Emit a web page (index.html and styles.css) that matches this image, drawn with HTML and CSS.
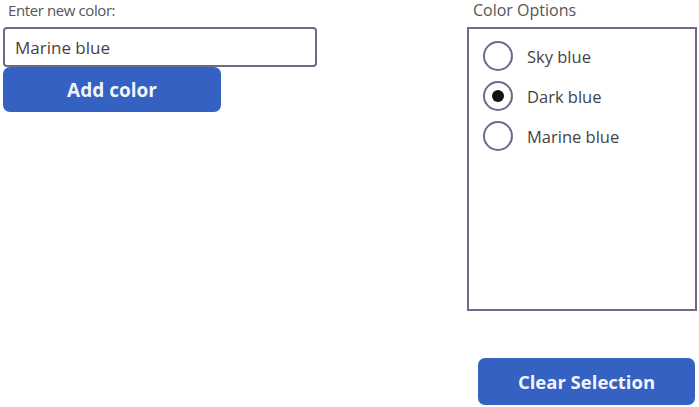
FILE: index.html
```html
<!DOCTYPE html>
<html lang="en">
<head>
  <meta charset="UTF-8">
  <meta name="viewport" content="width=device-width, initial-scale=1.0">
  <title>Color Options</title>
  <link rel="stylesheet" href="styles.css">
</head>
<body>
  <main class="screen">
    <section class="add-panel">
      <p class="label">Enter new color:</p>
      <input type="text" class="color-input" value="Marine blue">
      <button class="btn add-btn">Add color</button>
    </section>

    <section class="options-panel">
      <p class="label options-label">Color Options</p>
      <div class="options">
        <label class="option">
          <span class="radio"></span>
          Sky blue
        </label>
        <label class="option">
          <span class="radio checked"></span>
          Dark blue
        </label>
        <label class="option">
          <span class="radio"></span>
          Marine blue
        </label>
      </div>
      <button class="btn clear-btn">Clear Selection</button>
    </section>
  </main>
</body>
</html>
```

FILE: styles.css
```css
body {
  font-family: "Open Sans", "Noto Sans", sans-serif;
  margin: 0;
  padding: 0;
  background: white;
  overflow: hidden;
}
.screen {
  display: flex;
  justify-content: space-between;
  padding: 0 2px 0 3px;
  height: 407px;
}
.label {
  margin: 0;
  color: #555;
  font-size: 15px;
  letter-spacing: -0.4px;
  line-height: 20px;
  padding-left: 5px;
  height: 27px;
}
.add-panel {
  width: 314px;
}
.color-input {
  display: block;
  box-sizing: border-box;
  width: 314px;
  height: 40px;
  border: 2px solid #6d6a8a;
  border-radius: 4px;
  padding: 0 10px;
  font-family: inherit;
  font-size: 17px;
  color: #444;
  outline: none;
}
.btn {
  display: block;
  background-color: #3461c2;
  border: none;
  border-radius: 7px;
  color: #f1f4fb;
  font-family: inherit;
  font-weight: 700;
  font-size: 19px;
  cursor: pointer;
}
.add-btn {
  width: 218px;
  height: 45px;
}
.options-panel {
  width: 230px;
}
.options-label {
  padding-left: 6px;
  font-size: 16px;
  letter-spacing: 0;
}
.options {
  box-sizing: border-box;
  height: 284px;
  border: 2px solid #6d6a8a;
  padding: 12px 0 0 14px;
  display: flex;
  flex-direction: column;
  gap: 10px;
}
.option {
  display: flex;
  align-items: center;
  gap: 14px;
  height: 30px;
  color: #444;
  font-size: 16.5px;
}
.radio {
  box-sizing: border-box;
  width: 30px;
  height: 30px;
  border: 2.5px solid #6d6a8a;
  border-radius: 50%;
  display: flex;
  align-items: center;
  justify-content: center;
}
.radio.checked::after {
  content: "";
  width: 12px;
  height: 12px;
  border-radius: 50%;
  background: #111;
}
.clear-btn {
  width: 217px;
  height: 47px;
  margin: 47px 0 0 11px;
  font-size: 18.5px;
}
```
